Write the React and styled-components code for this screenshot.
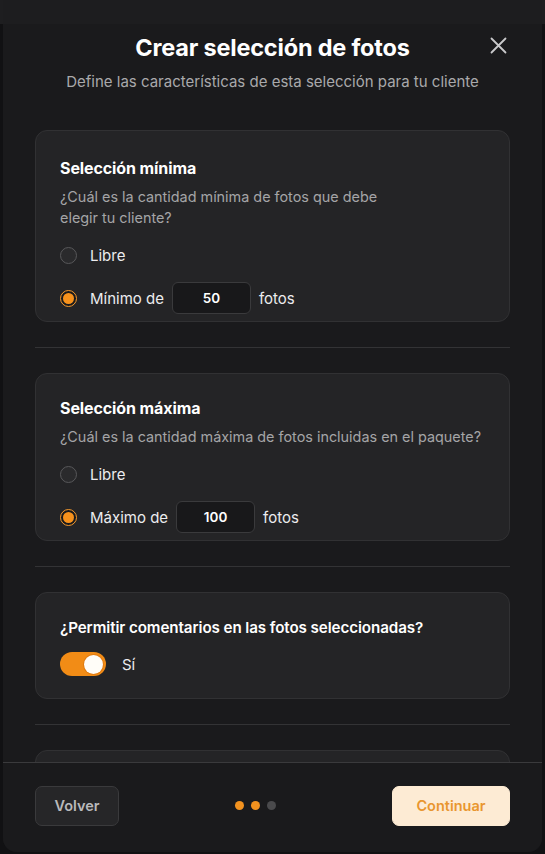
import React, { useState } from "react";
import styled, { createGlobalStyle } from "styled-components";

const GlobalStyle = createGlobalStyle`
  html, body {
    margin: 0;
    padding: 0;
    height: 100%;
  }
  body {
    background: linear-gradient(#1e1e20 0 24px, #111113 24px);
    font-family: "Inter", "Noto Sans", sans-serif;
    color: #fff;
    overflow: hidden;
  }
`;

const Modal = styled.div`
  margin: 0 3px;
  height: 852px;
  display: flex;
  flex-direction: column;
  background: linear-gradient(#1d1d1f 0 24px, #1a1a1c 24px);
  border-radius: 0 0 14px 14px;
  overflow: hidden;
`;

const Header = styled.header`
  position: relative;
  display: flex;
  flex-direction: column;
  align-items: center;
  padding: 33px 32px 0;
`;

const Title = styled.h1`
  margin: 0;
  font-size: 23.5px;
  font-weight: 700;
  line-height: 30px;
  letter-spacing: -0.2px;
`;

const Subtitle = styled.p`
  margin: 9px 0 0;
  font-size: 15px;
  line-height: 20px;
  color: #a9a9ab;
`;

const CloseButton = styled.button`
  position: absolute;
  top: 35px;
  right: 34px;
  width: 20px;
  height: 20px;
  padding: 0;
  border: none;
  background: none;
  color: #c9c9cb;
  display: flex;
  align-items: center;
  justify-content: center;
`;

const Body = styled.main`
  flex: 1;
  overflow: hidden;
  padding: 38px 32px 0;
  display: flex;
  flex-direction: column;
  gap: 25px;
`;

const Card = styled.section`
  flex-shrink: 0;
  background: #242426;
  border: 1px solid #313133;
  border-radius: 12px;
  padding: ${(p) => p.$pad || "24px 24px 8px"};
  min-height: ${(p) => p.$min || "auto"};
  box-sizing: border-box;
`;

const CardTitle = styled.h2`
  margin: 0;
  font-size: ${(p) => p.$size || "16px"};
  font-weight: ${(p) => p.$weight || 700};
  line-height: 24px;
  letter-spacing: -0.1px;
`;

const Description = styled.p`
  margin: 6px 0 0;
  max-width: ${(p) => p.$max || "none"};
  font-size: 14.4px;
  line-height: 21px;
  color: #a4a4a6;
`;

const Options = styled.div`
  display: flex;
  flex-direction: column;
  margin-top: 7px;
`;

const OptionRow = styled.label`
  display: flex;
  align-items: center;
  height: ${(p) => p.$h || "40px"};
  font-size: 15px;
  color: #ececee;
`;

const Radio = styled.span`
  width: 17px;
  height: 17px;
  margin-right: 13px;
  border-radius: 50%;
  box-sizing: border-box;
  border: 1.5px solid ${(p) => (p.$on ? "#f59a2e" : "#58585a")};
  background: ${(p) => (p.$on ? "#1a1a1c" : "#2a2a2c")};
  display: flex;
  align-items: center;
  justify-content: center;
  &::after {
    content: "";
    width: 11px;
    height: 11px;
    border-radius: 50%;
    background: #f7921c;
    display: ${(p) => (p.$on ? "block" : "none")};
  }
`;

const NumberBox = styled.span`
  width: 79px;
  height: 32px;
  margin: 0 8px;
  box-sizing: border-box;
  background: #18181a;
  border: 1px solid #3a3a3c;
  border-radius: 6px;
  display: flex;
  align-items: center;
  justify-content: center;
  font-size: 13.5px;
  font-weight: 600;
  color: #fff;
`;

const Divider = styled.hr`
  flex-shrink: 0;
  margin: 0;
  border: none;
  border-top: 1px solid #333335;
`;

const ToggleRow = styled.div`
  display: flex;
  align-items: center;
  gap: 16px;
  margin-top: 12px;
  font-size: 15px;
  color: #ececee;
`;

const Track = styled.span`
  width: 46px;
  height: 24px;
  border-radius: 12px;
  background: ${(p) => (p.$on ? "#f28c16" : "#3a3a3c")};
  display: flex;
  align-items: center;
  justify-content: ${(p) => (p.$on ? "flex-end" : "flex-start")};
  padding: 0 3px;
  box-sizing: border-box;
`;

const Knob = styled.span`
  width: 19px;
  height: 19px;
  border-radius: 50%;
  background: #fffdf8;
  box-shadow: 0 0 0 1px #e07a10;
`;

const Footer = styled.footer`
  flex-shrink: 0;
  height: 90px;
  border-top: 1px solid #3a3a3c;
  background: #1a1a1c;
  display: flex;
  align-items: center;
  justify-content: space-between;
  padding: 0 32px 4px;
  box-sizing: border-box;
`;

const Button = styled.button`
  height: 40px;
  padding: 0 ${(p) => (p.$primary ? "22px" : "18px")};
  min-width: ${(p) => (p.$primary ? "118px" : "84px")};
  border-radius: 7px;
  border: 1px solid ${(p) => (p.$primary ? "#fdebd3" : "#3a3a3c")};
  background: ${(p) => (p.$primary ? "#fdebd4" : "#262628")};
  color: ${(p) => (p.$primary ? "#e9962f" : "#b9b9bb")};
  font-family: inherit;
  font-size: 14.5px;
  font-weight: 600;
`;

const Dots = styled.div`
  display: flex;
  gap: 7px;
`;

const Dot = styled.span`
  width: 9px;
  height: 9px;
  border-radius: 50%;
  background: ${(p) => (p.$on ? "#f2921f" : "#4a4a4c")};
`;

const CloseIcon = () => (
  <svg width="17" height="17" viewBox="0 0 17 17" fill="none">
    <path
      d="M1.5 1.5L15.5 15.5M15.5 1.5L1.5 15.5"
      stroke="currentColor"
      strokeWidth="1.8"
      strokeLinecap="round"
    />
  </svg>
);

const LimitOption = ({ label, value, on }) => (
  <OptionRow $h="46px">
    <Radio $on={on} />
    {label}
    <NumberBox>{value}</NumberBox>
    fotos
  </OptionRow>
);

export default function App() {
  const [comments, setComments] = useState(true);
  const steps = [true, true, false];

  return (
    <>
      <GlobalStyle />
      <Modal>
        <Header>
          <Title>Crear selección de fotos</Title>
          <Subtitle>Define las características de esta selección para tu cliente</Subtitle>
          <CloseButton aria-label="Cerrar">
            <CloseIcon />
          </CloseButton>
        </Header>

        <Body>
          <Card $pad="25px 24px 0">
            <CardTitle>Selección mínima</CardTitle>
            <Description $max="340px">
              ¿Cuál es la cantidad mínima de fotos que debe elegir tu cliente?
            </Description>
            <Options>
              <OptionRow>
                <Radio />
                Libre
              </OptionRow>
              <LimitOption label="Mínimo de" value="50" on />
            </Options>
          </Card>

          <Divider />

          <Card $pad="22px 24px 0">
            <CardTitle>Selección máxima</CardTitle>
            <Description>
              ¿Cuál es la cantidad máxima de fotos incluidas en el paquete?
            </Description>
            <Options>
              <OptionRow>
                <Radio />
                Libre
              </OptionRow>
              <LimitOption label="Máximo de" value="100" on />
            </Options>
          </Card>

          <Divider />

          <Card $pad="23px 24px 22px">
            <CardTitle $size="15.2px" $weight={600}>
              ¿Permitir comentarios en las fotos seleccionadas?
            </CardTitle>
            <ToggleRow onClick={() => setComments((c) => !c)}>
              <Track $on={comments}>
                <Knob />
              </Track>
              {comments ? "Sí" : "No"}
            </ToggleRow>
          </Card>

          <Divider />

          <Card $min="120px" />
        </Body>

        <Footer>
          <Button>Volver</Button>
          <Dots>
            {steps.map((on, i) => (
              <Dot key={i} $on={on} />
            ))}
          </Dots>
          <Button $primary>Continuar</Button>
        </Footer>
      </Modal>
    </>
  );
}
